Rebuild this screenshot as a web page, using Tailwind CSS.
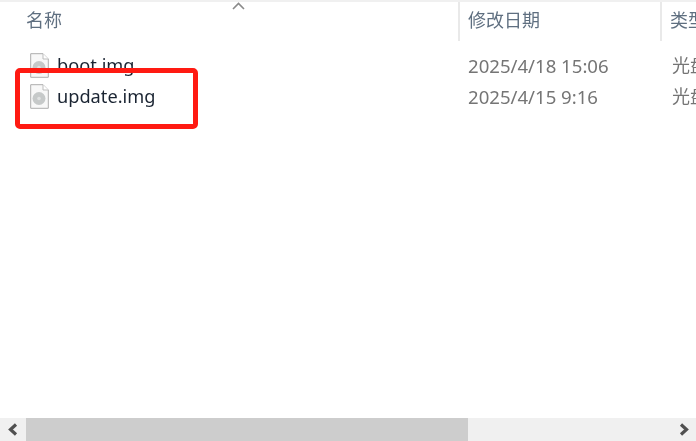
<!DOCTYPE html>
<html lang="zh-CN">
  <head>
    <meta charset="UTF-8" />
    <title>文件列表</title>
    <script src="https://cdn.jsdelivr.net/npm/@tailwindcss/browser@4"></script>
  </head>
  <body class="bg-white">
    <div class="relative flex h-[441px] w-[696px] flex-col overflow-hidden bg-white blur-[0.4px] font-['Noto_Sans','Noto_Sans_CJK_SC',sans-serif]">
      <!-- 表头 -->
      <div class="relative flex h-[41px] shrink-0 border-t-2 border-[#f0f0f0] text-[18px] text-[#5f6f80]">
        <div class="flex w-[460px] shrink-0 items-center border-r-2 border-[#e9e9e9] pb-[3px] pl-[26px]">名称</div>
        <div class="flex w-[202px] shrink-0 items-center border-r-2 border-[#e9e9e9] pb-[3px] pl-[8px]">修改日期</div>
        <div class="flex w-[34px] shrink-0 items-center pb-[3px] pl-[8px] whitespace-nowrap">类型</div>
        <svg class="absolute left-[231px] top-0" width="15" height="8" viewBox="0 0 15 8" fill="none">
          <path d="M2 7 L7.5 1.5 L13 7" stroke="#8a8a8a" stroke-width="1.6" />
        </svg>
      </div>

      <!-- 文件列表 -->
      <div class="flex-1 pt-[9px] text-[18px]">
        <div class="flex h-[31px] items-center">
          <div class="flex w-[460px] shrink-0 items-center pl-[30px]">
            <svg width="19" height="25" viewBox="0 0 19 25">
              <path d="M0.7 0.7 H13 L18.3 6 V24.3 H0.7 Z" fill="#f8f8f8" stroke="#adadad" />
              <path d="M13 0.7 V6 H18.3" fill="#ffffff" stroke="#bdbdbd" />
              <circle cx="9" cy="14.5" r="6.5" fill="#c6c9c9" />
              <circle cx="9" cy="14.5" r="1.8" fill="#dfe1e1" />
            </svg>
            <span class="ml-[8px] text-[18.2px] text-[#1a2432]">boot.img</span>
          </div>
          <div class="w-[202px] shrink-0 pl-[8px] text-[18.6px] text-[#757575]">2025/4/18 15:06</div>
          <div class="w-[34px] shrink-0 pl-[10px] text-[#757575] whitespace-nowrap">光盘</div>
        </div>
        <div class="flex h-[31px] items-center">
          <div class="flex w-[460px] shrink-0 items-center pl-[30px]">
            <svg width="19" height="25" viewBox="0 0 19 25">
              <path d="M0.7 0.7 H13 L18.3 6 V24.3 H0.7 Z" fill="#f8f8f8" stroke="#adadad" />
              <path d="M13 0.7 V6 H18.3" fill="#ffffff" stroke="#bdbdbd" />
              <circle cx="9" cy="14.5" r="6.5" fill="#c6c9c9" />
              <circle cx="9" cy="14.5" r="1.8" fill="#dfe1e1" />
            </svg>
            <span class="ml-[8px] text-[18.2px] text-[#1a2432]">update.img</span>
          </div>
          <div class="w-[202px] shrink-0 pl-[8px] text-[18.6px] text-[#757575]">2025/4/15 9:16</div>
          <div class="w-[34px] shrink-0 pl-[10px] text-[#757575] whitespace-nowrap">光盘</div>
        </div>
      </div>

      <!-- 横向滚动条 -->
      <div class="flex h-[23px] shrink-0 items-center bg-[#f0f0f0]">
        <div class="flex h-full w-[26px] items-center justify-center pr-[2px]">
          <svg width="11" height="13" viewBox="0 0 11 13" fill="none">
            <path d="M9 1.5 L3.5 6.5 L9 11.5" stroke="#505050" stroke-width="3.2" />
          </svg>
        </div>
        <div class="h-full w-[442px] bg-[#cdcdcd]"></div>
        <div class="flex-1"></div>
        <div class="flex h-full w-[26px] items-center justify-center pl-[2px]">
          <svg width="11" height="13" viewBox="0 0 11 13" fill="none">
            <path d="M2 1.5 L7.5 6.5 L2 11.5" stroke="#505050" stroke-width="3.2" />
          </svg>
        </div>
      </div>

      <!-- 红色标注框 -->
      <div class="absolute left-[15px] top-[68px] h-[61px] w-[183px] rounded-[5px] border-[5px] border-[#ff1a12]"></div>
    </div>
  </body>
</html>
